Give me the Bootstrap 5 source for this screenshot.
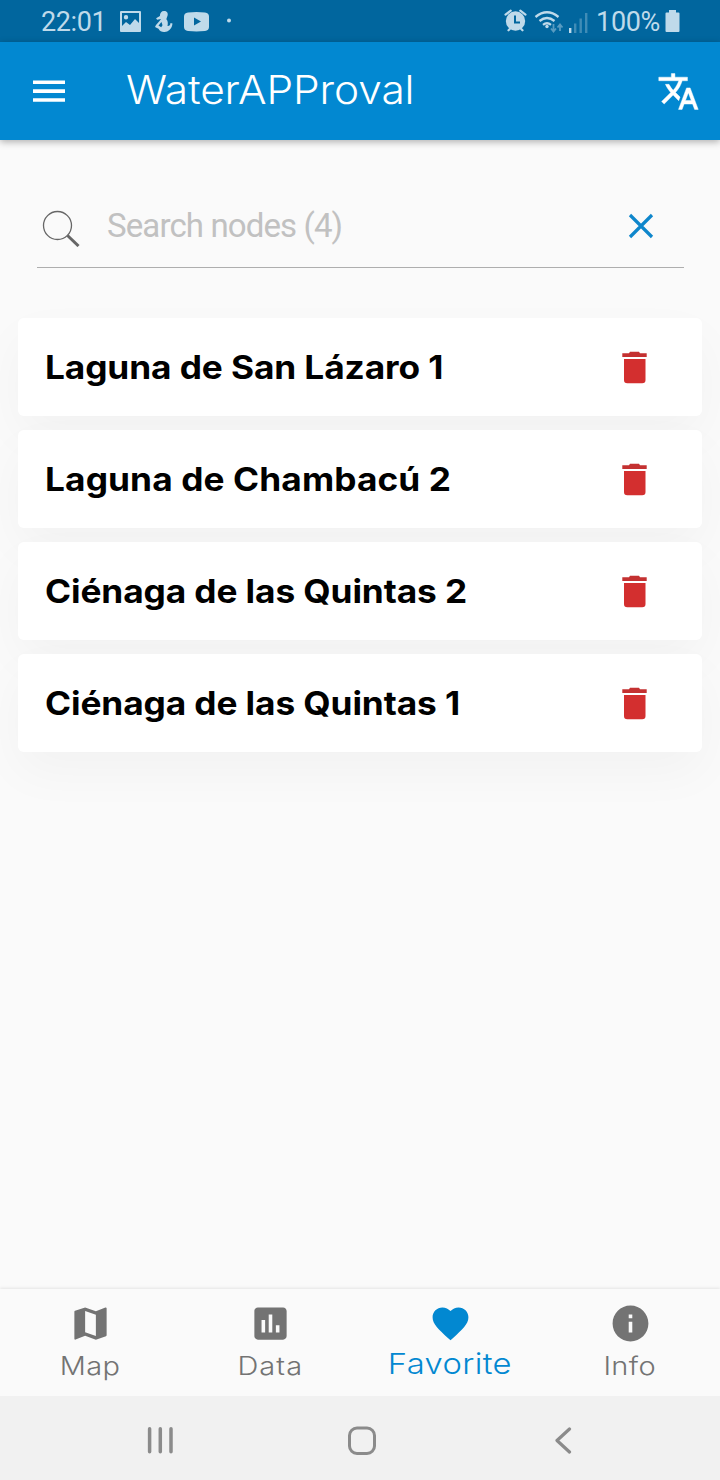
<!DOCTYPE html>
<html lang="en">
<head>
<meta charset="utf-8">
<meta name="viewport" content="width=device-width, initial-scale=1">
<title>WaterAPProval</title>
<link href="https://cdn.jsdelivr.net/npm/bootstrap@5.3.0/dist/css/bootstrap.min.css" rel="stylesheet">
<style>
  body { height: 1480px; background: #fafafa; font-family: Inter, "Open Sans", sans-serif; overflow: hidden; }
  svg { display: block; flex: none; }
  .status-bar { height: 42px; background: #01669e; color: #bfdaea; font: 27px/42px Roboto, sans-serif; padding: 2px 40px 0 41px; }
  .clock { letter-spacing: -.4px; }
  .charge { letter-spacing: -.35px; margin: 0 5px 0 6px; }
  .notices { margin-left: 13px; }
  .app-bar { height: 98px; background: #0288d1; padding: 0 20.500px 0 32px; box-shadow: 0 2px 7px rgba(0,0,0,.3); z-index: 2; }
  .app-title { font-size: 39px; font-weight: 300; line-height: 96px; margin: 0 0 2px 60px; letter-spacing: -.1px; color: #fff; transform: scaleX(1.088); transform-origin: left; }
  .search-field { margin: 44px 36px 0 37px; height: 84px; border-bottom: 1.5px solid #aeaeae; padding: 1px 29px 0 5px; }
  .search-field input { font: 33px/40px Roboto, sans-serif; letter-spacing: -.88px; margin: 0 0 1px 27px; color: #444; outline: 0; }
  .search-field input::placeholder { color: #c1c1c1; opacity: 1; }
  .search-icon { margin-top: 3px; }
  .node-list { margin: 49.500px 18px 0; gap: 14px; }
  .node-item { height: 98px; border-radius: 6px; padding: 1px 52px 0 27px; background: #fff; }
  .node-wrap { border-radius: 6px; box-shadow: 0 20px 50px rgba(0,0,0,.035); }
  .node-name { font-size: 32.5px; font-weight: 700; color: #000; line-height: 97px; white-space: nowrap; letter-spacing: -.1px; transform: scaleX(1.085); transform-origin: left; }
  .tab-bar { height: 107.500px; background: #fafafa; box-shadow: 0 -1px 3px rgba(0,0,0,.09); padding-top: 13.500px; color: #737373; }
  .tab-link { color: inherit; text-decoration: none; font-size: 25px; font-weight: 300; line-height: 30px; letter-spacing: .3px; }
  .tab-link span { margin-top: 6px; white-space: nowrap; transform: scaleX(1.16); }
  .tab-link.current { color: #0288d1; font-size: 29px; }
  .tab-link.current span { margin-top: 4px; transform: scaleX(1.13); }
  .system-bar { height: 84px; background: #f1f1f1; padding: 6px 147px 0 146px; }
  .home-key { margin-right: 4px; }
</style>
</head>
<body class="d-flex flex-column">

<div class="status-bar d-flex align-items-center">
  <span class="clock">22:01</span>
  <svg class="notices" width="116" height="26" viewBox="119 8 116 26" fill="#bfdaea">
    <path fill-rule="evenodd" d="M121 10h19q1 0 1 1v19q0 1-1 1h-19q-1 0-1-1v-19q0-1 1-1zm1 2v13l4-4 4 3 5-6 4 4v-10zM126 14a2.2 2.2 0 1 1 0 4.4 2.2 2.2 0 0 1 0-4.4z"/>
    <path d="M164 10c3 0 4 2 3.700 4-.3 2-1.500 3-1.200 4.500 1.600 1.500 1.500 4 1 6.500 2 .2 2.800-1 3-3l2 .4-.3 1.800c-1 4-4 6.500-7.500 6.800-2.700.2-5-.7-6.200-3.200L155 26l1-2 3.300-3.800 1.800-2.200-4 .8-1-1.600 3.800-2.200c0-3 1.500-5 4.100-5z"/>
    <path d="M158.500 24.500l3-3.500 1 3.200-1.300 2z" fill="#01669e"/>
    <path fill-rule="evenodd" d="M188 11.500q8.500-.8 17 0q4 .5 4 4v10.500q0 3.500-4 4q-8.500.8-17 0q-4-.5-4-4v-10.500q0-3.500 4-4zM194 16.500v8l7-4z"/>
    <circle cx="229" cy="19.500" r="2"/>
  </svg>
  <svg class="ms-auto" width="86" height="28" viewBox="504 6 86 28" fill="#bfdaea">
    <circle cx="515.500" cy="19" r="9.700"/>
    <path d="M505.500 12.700l5.200-4M525.500 12.700l-5.200-4M508.500 28.300l3-3M522.500 28.300l-3-3" stroke="#bfdaea" stroke-width="2.200" stroke-linecap="round"/>
    <path d="M515 13.500v7h5" fill="none" stroke="#01669e" stroke-width="2"/>
    <g fill="none" stroke="#bfdaea" stroke-width="2.300"><path d="M535.500 15q11.500-9.500 23 0M539.500 19q7.500-6 15 0M543 22.800q4-3 8 0"/></g>
    <circle cx="547" cy="24.500" r="1.700"/>
    <path d="M553.500 22v7.500M551 26.500l2.500 3 2.500-3M560 29v-6.500M557.500 25.500l2.500-3 2.500 3" fill="none" stroke="#589bc1" stroke-width="1.800"/>
    <path d="M569 26h2.400v5H569z"/>
    <path fill="#408cb6" d="M574 21.500h2.400V31H574zM579.500 16.500h2.400V31h-2.400zM585 11h2.400v20H585z"/>
  </svg>
  <span class="charge">100%</span>
  <svg style="margin-bottom:2px" width="15" height="22" viewBox="0 0 15 22" fill="#bfdaea"><path d="M4 0h7v2.500h2.500q1 0 1 1V21q0 1-1 1h-12q-1 0-1-1V3.500q0-1 1-1H4z"/></svg>
</div>

<nav class="app-bar d-flex align-items-center position-relative">
  <svg width="34" height="24" viewBox="0 0 34 24" fill="#fff"><path d="M1 1.500h32v3.600H1zM1 10.300h32v3.600H1zM1 19.200h32v3.600H1z"/></svg>
  <div class="app-title">WaterAPProval</div>
  <svg class="ms-auto" width="43" height="43" viewBox="0 0 24 24" fill="#fff" stroke="#fff" stroke-width=".25"><path d="M12.870 15.070l-2.540-2.510.03-.03c1.740-1.940 2.980-4.170 3.710-6.530H17V4h-7V2H8v2H1v1.990h11.170C11.500 7.920 10.440 9.750 9 11.350 8.070 10.320 7.300 9.190 6.690 8h-2c.73 1.630 1.730 3.170 2.980 4.560l-5.090 5.020L4 19l5-5 3.110 3.110.76-2.040zM18.500 10h-2L12 22h2l1.120-3h4.750L21 22h2l-4.500-12zm-2.620 7l1.620-4.330L19.120 17h-3.240z"/></svg>
</nav>

<div class="search-field d-flex align-items-center">
  <svg class="search-icon" width="38" height="38" viewBox="0 0 38 38" fill="none" stroke="#666"><circle cx="15.500" cy="16.500" r="14" stroke-width="1.300"/><path d="M25.500 26.500l11 10.500" stroke-width="3"/></svg>
  <input class="flex-grow-1 border-0 bg-transparent p-0" type="text" placeholder="Search nodes (4)">
  <svg width="28" height="28" viewBox="0 0 28 28" stroke="#0e86cb" stroke-width="3.200"><path d="M3 3l22 22M25 3L3 25"/></svg>
</div>

<main class="node-list d-flex flex-column">
  <div class="node-wrap"><div class="node-item position-relative d-flex align-items-center justify-content-between"><span class="node-name">Laguna de San Lázaro 1</span><svg width="30" height="34" viewBox="0 0 30 34"><path fill="#c43131" d="M2.300 3.300H9l1-1.600h9l1 1.600h6.700V7H2.300z"/><path fill="#d32f2f" d="M4 9h21.500v21q0 3.300-3.300 3.300H7.300Q4 33.300 4 30z"/></svg></div></div>
  <div class="node-wrap"><div class="node-item position-relative d-flex align-items-center justify-content-between"><span class="node-name" style="letter-spacing:.1px">Laguna de Chambacú 2</span><svg width="30" height="34" viewBox="0 0 30 34"><path fill="#c43131" d="M2.300 3.300H9l1-1.600h9l1 1.600h6.700V7H2.300z"/><path fill="#d32f2f" d="M4 9h21.500v21q0 3.300-3.300 3.300H7.300Q4 33.300 4 30z"/></svg></div></div>
  <div class="node-wrap"><div class="node-item position-relative d-flex align-items-center justify-content-between"><span class="node-name">Ciénaga de las Quintas 2</span><svg width="30" height="34" viewBox="0 0 30 34"><path fill="#c43131" d="M2.300 3.300H9l1-1.600h9l1 1.600h6.700V7H2.300z"/><path fill="#d32f2f" d="M4 9h21.500v21q0 3.300-3.300 3.300H7.300Q4 33.300 4 30z"/></svg></div></div>
  <div class="node-wrap"><div class="node-item position-relative d-flex align-items-center justify-content-between"><span class="node-name">Ciénaga de las Quintas 1</span><svg width="30" height="34" viewBox="0 0 30 34"><path fill="#c43131" d="M2.300 3.300H9l1-1.600h9l1 1.600h6.700V7H2.300z"/><path fill="#d32f2f" d="M4 9h21.500v21q0 3.300-3.300 3.300H7.300Q4 33.300 4 30z"/></svg></div></div>
</main>

<footer class="mt-auto">
  <div class="tab-bar row g-0 text-center">
    <a class="tab-link col-3 d-flex flex-column align-items-center" href="#">
      <svg width="43" height="43" viewBox="0 0 24 24" fill="currentColor"><path d="M20.500 3l-.16.03L15 5.100 9 3 3.360 4.900c-.21.07-.36.25-.36.480V20.500c0 .28.22.5.5.5l.16-.03L9 18.900l6 2.100 5.640-1.900c.21-.07.36-.25.36-.48V3.500c0-.28-.22-.5-.5-.5zM15 19l-6-2.110V5l6 2.110V19z"/></svg>
      <span>Map</span></a>
    <a class="tab-link col-3 d-flex flex-column align-items-center" href="#">
      <svg width="43" height="43" viewBox="0 0 24 24" fill="currentColor"><path d="M19 3H5c-1.100 0-2 .9-2 2v14c0 1.100.9 2 2 2h14c1.100 0 2-.9 2-2V5c0-1.100-.9-2-2-2zM9 17H7v-7h2v7zm4 0h-2V7h2v10zm4 0h-2v-4h2v4z"/></svg>
      <span style="letter-spacing:.9px">Data</span></a>
    <a class="tab-link current col-3 d-flex flex-column align-items-center" href="#">
      <svg width="43" height="43" viewBox="0 0 24 24" fill="currentColor"><path d="M12 21.350l-1.450-1.320C5.400 15.360 2 12.280 2 8.500 2 5.420 4.420 3 7.500 3c1.740 0 3.410.81 4.500 2.090C13.090 3.810 14.760 3 16.500 3 19.580 3 22 5.420 22 8.500c0 3.780-3.400 6.860-8.550 11.540L12 21.350z"/></svg>
      <span>Favorite</span></a>
    <a class="tab-link col-3 d-flex flex-column align-items-center" href="#">
      <svg width="43" height="43" viewBox="0 0 24 24" fill="currentColor"><path d="M12 2C6.480 2 2 6.480 2 12s4.480 10 10 10 10-4.480 10-10S17.520 2 12 2zm1 15h-2v-6h2v6zm0-8h-2V7h2v2z"/></svg>
      <span>Info</span></a>
  </div>
  <div class="system-bar d-flex align-items-center justify-content-between">
    <svg width="28" height="28" viewBox="0 0 28 28" stroke="#8b8b8b" stroke-width="3.500" stroke-linecap="round"><path d="M3.600 1.800v23M14.300 1.800v23M25 1.800v23"/></svg>
    <svg class="home-key" width="30" height="30" viewBox="0 0 30 30" fill="none" stroke="#8b8b8b" stroke-width="3"><rect x="2.500" y="2" width="25" height="25.500" rx="7.500"/></svg>
    <svg width="20" height="28" viewBox="0 0 20 28" fill="none" stroke="#8b8b8b" stroke-width="3.200" stroke-linecap="round" stroke-linejoin="round"><path d="M16.500 2L4 13.500 16.500 25"/></svg>
  </div>
</footer>
<script src="https://cdn.jsdelivr.net/npm/bootstrap@5.3.0/dist/js/bootstrap.bundle.min.js"></script>
</body>
</html>
